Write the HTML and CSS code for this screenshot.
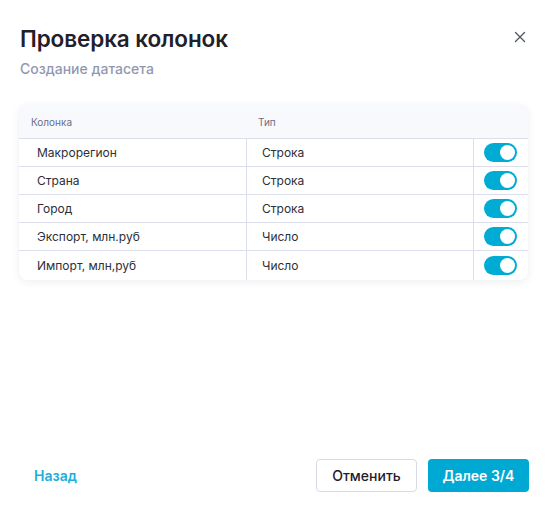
FILE: index.html
```html
<!DOCTYPE html>
<html lang="ru">
<head>
<meta charset="utf-8">
<link rel="stylesheet" href="styles.css">
</head>
<body>
<div class="dialog">
  <div class="head">
    <div>
      <h1 class="title">Проверка колонок</h1>
      <div class="subtitle">Создание датасета</div>
    </div>
    <button class="close" aria-label="Закрыть">
      <svg width="12" height="12" viewBox="0 0 12 12"><path d="M1.5 1.5L10.5 10.5M10.5 1.5L1.5 10.5" stroke="#555a66" stroke-width="1.4" stroke-linecap="round"/></svg>
    </button>
  </div>

  <div class="table">
    <div class="hcell c1">Колонка</div>
    <div class="hcell c2">Тип</div>
    <div class="hcell c3"></div>

    <div class="cell c1">Макрорегион</div>
    <div class="cell c2">Строка</div>
    <div class="cell c3"><span class="toggle"><span class="knob"></span></span></div>

    <div class="cell c1">Страна</div>
    <div class="cell c2">Строка</div>
    <div class="cell c3"><span class="toggle"><span class="knob"></span></span></div>

    <div class="cell c1">Город</div>
    <div class="cell c2">Строка</div>
    <div class="cell c3"><span class="toggle"><span class="knob"></span></span></div>

    <div class="cell c1">Экспорт, млн.руб</div>
    <div class="cell c2">Число</div>
    <div class="cell c3"><span class="toggle"><span class="knob"></span></span></div>

    <div class="cell c1 last">Импорт, млн,руб</div>
    <div class="cell c2 last">Число</div>
    <div class="cell c3 last"><span class="toggle"><span class="knob"></span></span></div>
  </div>

  <div class="footer">
    <button class="back">Назад</button>
    <div class="actions">
      <button class="btn cancel">Отменить</button>
      <button class="btn primary">Далее 3/4</button>
    </div>
  </div>
</div>
</body>
</html>
```

FILE: styles.css
```css
* { box-sizing: border-box; }
html, body { margin: 0; padding: 0; background: #ffffff; }
body { font-family: Inter, "Noto Sans", sans-serif; color: #1f2029; }

.dialog {
  width: 553px;
  height: 515px;
  padding: 24px 24px 23px 19px;
  display: flex;
  flex-direction: column;
}

.head {
  display: flex;
  justify-content: space-between;
  align-items: flex-start;
}
.title {
  margin: 0 0 0 1px;
  font-size: 22.5px;
  line-height: 30px;
  font-weight: 600;
  color: #1f2029;
  letter-spacing: -0.1px;
}
.subtitle {
  margin: 5px 0 0 1px;
  font-size: 14px;
  line-height: 20px;
  font-weight: 500;
  color: #9297b0;
}
.close {
  margin-top: 7px;
  margin-right: 3px;
  width: 12px;
  height: 12px;
  padding: 0;
  border: 0;
  background: none;
  display: flex;
}

.table {
  margin-top: 26px;
  width: 509px;
  display: grid;
  grid-template-columns: 227px 227px 55px;
  border-radius: 8px;
  background: #fff;
  box-shadow: 0 2px 8px rgba(40, 50, 90, 0.08), 0 0 1px rgba(40, 50, 90, 0.06);
  overflow: hidden;
}
.hcell {
  height: 34px;
  background: #f8f9fd;
  border-bottom: 1px solid #dcdeeb;
  font-size: 10px;
  color: #6a6e84;
  display: flex;
  align-items: center;
  padding-left: 12px;
}
.cell {
  height: 28px;
  border-bottom: 1px solid #dcdeeb;
  font-size: 12px;
  color: #2d2f39;
  display: flex;
  align-items: center;
}
.cell.last { border-bottom: 0; height: 29px; }
.cell.c1 { padding-left: 18px; }
.cell.c2 { padding-left: 15px; border-left: 1px solid #dcdeeb; }
.cell.c3 { padding-left: 10px; border-left: 1px solid #dcdeeb; }

.toggle {
  width: 33px;
  height: 19px;
  border-radius: 10px;
  background: #00acd4;
  display: flex;
  align-items: center;
  justify-content: flex-end;
  padding-right: 2px;
}
.knob {
  width: 15px;
  height: 15px;
  border-radius: 50%;
  background: #fff;
}

.footer {
  margin-top: auto;
  display: flex;
  justify-content: space-between;
  align-items: center;
}
.back {
  margin-left: 15px;
  padding: 0;
  border: 0;
  background: none;
  font-family: inherit;
  font-size: 14px;
  font-weight: 600;
  color: #1eaedb;
}
.actions {
  display: flex;
  gap: 11px;
}
.btn {
  height: 33px;
  width: 101px;
  border-radius: 4px;
  font-family: inherit;
  font-size: 14px;
  padding: 0;
}
.cancel {
  background: #fff;
  border: 1px solid #d8dbe7;
  color: #1f2029;
  font-weight: 500;
}
.primary {
  background: #00a9d3;
  border: 0;
  color: #fff;
  font-weight: 600;
}
```
